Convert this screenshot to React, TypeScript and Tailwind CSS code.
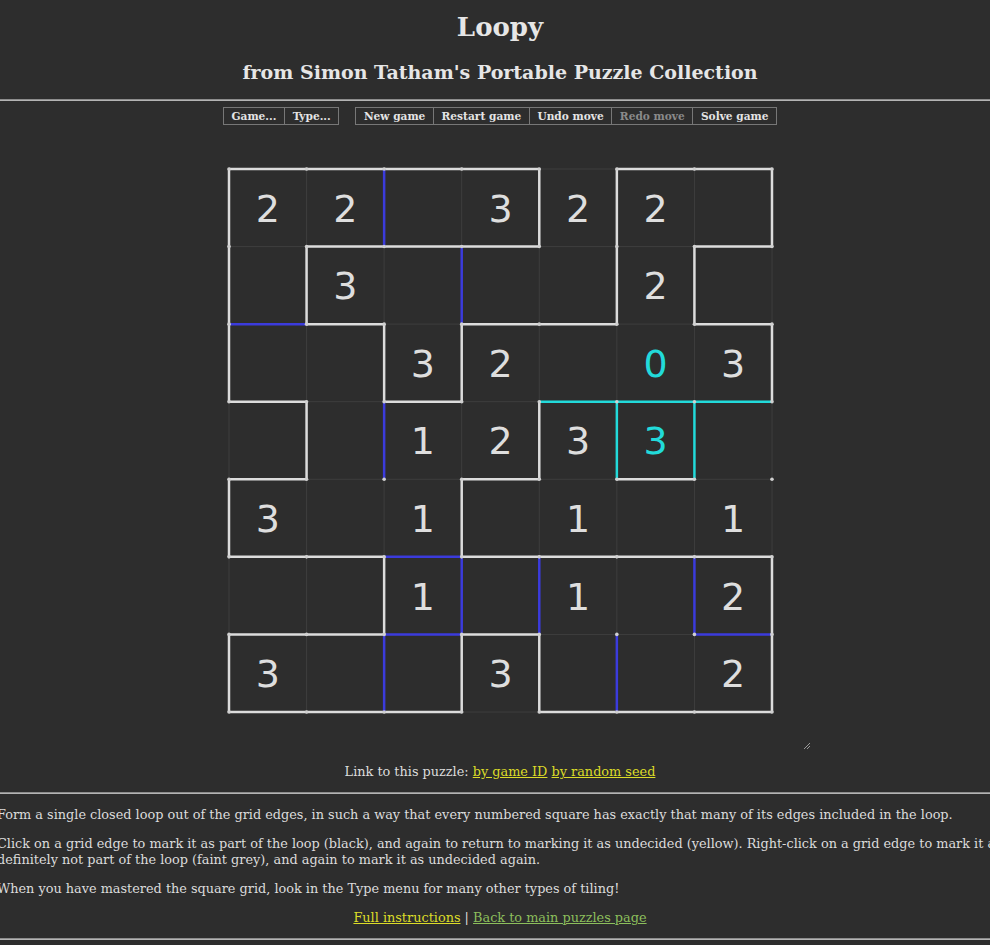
import React from "react";

const CELL = 77.57;
const OX = 29;
const OY = 29;

const clues = [
  "22.322.",
  ".3...2.",
  "..32.03",
  "..1233.",
  "3.1.1.1",
  "..1.1.2",
  "3..3..2",
];

// cells whose clue is shown as an error
const errCells = ["5,2", "5,3"];

// horizontal edges, one string per row line (7 cells each)
const hEdges = [
  "wwww.ww",
  ".www..w",
  "bw.ww.w",
  "w.w.ccc",
  "w..w.w.",
  "wwbwwww",
  "wwbw..b",
  "www.www",
];

// vertical edges, one string per cell row (8 column lines each)
const vEdges = [
  "w.b.ww.w",
  "ww.b.ww.",
  "w.ww...w",
  ".wb.wcc.",
  "w..w....",
  "..wbb.bw",
  "w.bwwb.w",
];

const edgeColor: Record<string, string> = {
  w: "#dcdcdc",
  b: "#3b3bdc",
  c: "#22dada",
};

function LoopyGrid() {
  const pos = (i: number) => i * CELL;
  const lines: React.ReactNode[] = [];

  for (let i = 0; i <= 7; i++) {
    lines.push(
      <line key={"fh" + i} x1={OX} y1={OY + pos(i)} x2={OX + pos(7)} y2={OY + pos(i)} stroke="#3e3e3e" strokeWidth={1} />,
      <line key={"fv" + i} x1={OX + pos(i)} y1={OY} x2={OX + pos(i)} y2={OY + pos(7)} stroke="#3e3e3e" strokeWidth={1} />
    );
  }

  hEdges.forEach((row, r) =>
    row.split("").forEach((e, c) => {
      if (e === ".") return;
      lines.push(
        <line key={`h${r}-${c}`} x1={OX + pos(c)} y1={OY + pos(r)} x2={OX + pos(c + 1)} y2={OY + pos(r)} stroke={edgeColor[e]} strokeWidth={2.5} />
      );
    })
  );

  vEdges.forEach((row, r) =>
    row.split("").forEach((e, c) => {
      if (e === ".") return;
      lines.push(
        <line key={`v${r}-${c}`} x1={OX + pos(c)} y1={OY + pos(r)} x2={OX + pos(c)} y2={OY + pos(r + 1)} stroke={edgeColor[e]} strokeWidth={2.5} />
      );
    })
  );

  const dots: React.ReactNode[] = [];
  for (let r = 0; r <= 7; r++) {
    for (let c = 0; c <= 7; c++) {
      dots.push(<circle key={`d${r}-${c}`} cx={OX + pos(c)} cy={OY + pos(r)} r={1.8} fill="#d0d0d0" />);
    }
  }

  const nums: React.ReactNode[] = [];
  clues.forEach((row, r) =>
    row.split("").forEach((n, c) => {
      if (n === ".") return;
      const err = errCells.includes(`${c},${r}`);
      nums.push(
        <text
          key={`n${r}-${c}`}
          x={OX + pos(c) + CELL / 2}
          y={OY + pos(r) + CELL / 2 + 1}
          textAnchor="middle"
          dominantBaseline="central"
          fontSize={38}
          fontFamily="'DejaVu Sans', sans-serif"
          fill={err ? "#22dada" : "#dedede"}
        >
          {n}
        </text>
      );
    })
  );

  return (
    <svg width={600} height={600} viewBox="0 0 600 600">
      {lines}
      {dots}
      {nums}
    </svg>
  );
}

function Btn({ label, dim, first }: { label: string; dim?: boolean; first?: boolean }) {
  return (
    <button
      className={
        "h-[18px] px-[7.6px] border border-[#777] leading-[16px] text-[10.6px] font-bold bg-[#2d2d2d] " +
        (first ? "" : "-ml-px ") +
        (dim ? "text-[#8a8a8a]" : "text-[#e4e4e4]")
      }
    >
      {label}
    </button>
  );
}

function Rule({ className = "" }: { className?: string }) {
  return <div className={"w-full h-[2px] border-t border-t-[#8c8c8c] border-b border-b-[#b4b4b4] " + className} />;
}

export default function App() {
  return (
    <div className="w-full min-h-[945px] bg-[#2d2d2d] overflow-hidden">
      <div className="w-[1006px] -ml-[3px] flex flex-col items-center text-[#dcdcdc] text-[12.85px] font-['DejaVu_Serif',serif]">
        <h1 className="mt-[12px] h-[30px] leading-[30px] text-[26px] font-bold text-[#e6e6e6]">Loopy</h1>
        <h2 className="mt-[18px] h-[24px] leading-[24px] text-[19px] font-bold text-[#e6e6e6]">
          from Simon Tatham's Portable Puzzle Collection
        </h2>
        <Rule className="mt-[15px]" />

        <div className="mt-[6px] flex gap-[16px]">
          <div className="flex">
            <Btn label="Game..." first />
            <Btn label="Type..." />
          </div>
          <div className="flex">
            <Btn label="New game" first />
            <Btn label="Restart game" />
            <Btn label="Undo move" />
            <Btn label="Redo move" dim />
            <Btn label="Solve game" />
          </div>
        </div>

        <div className="relative mt-[15px] w-[600px] h-[600px]">
          <LoopyGrid />
          <svg className="absolute left-[603px] top-[602px]" width={8} height={8} viewBox="0 0 8 8">
            <line x1={1} y1={7} x2={7} y2={1} stroke="#9a9a9a" strokeWidth={1} />
            <line x1={4} y1={7} x2={7} y2={4} stroke="#9a9a9a" strokeWidth={1} />
          </svg>
        </div>

        <p className="mt-[24px] leading-[16px]">
          Link to this puzzle:{" "}
          <a className="underline text-[#dcdc28]" href="#">by game ID</a>{" "}
          <a className="underline text-[#dcdc28]" href="#">by random seed</a>
        </p>

        <Rule className="mt-[12px]" />

        <div className="w-full leading-[16px] flex flex-col gap-[13px] mt-[13px]">
          <p>
            Form a single closed loop out of the grid edges, in such a way that every numbered square has exactly that many of its edges included in the loop.
          </p>
          <p>
            Click on a grid edge to mark it as part of the loop (black), and again to return to marking it as undecided (yellow). Right-click on a grid edge to mark it as definitely not part of the loop (faint grey), and again to mark it as undecided again.
          </p>
          <p>When you have mastered the square grid, look in the Type menu for many other types of tiling!</p>
          <p className="text-center">
            <a className="underline text-[#dcdc28]" href="#">Full instructions</a> |{" "}
            <a className="underline text-[#8cbf5c]" href="#">Back to main puzzles page</a>
          </p>
        </div>

        <Rule className="mt-[12px]" />
      </div>
    </div>
  );
}
